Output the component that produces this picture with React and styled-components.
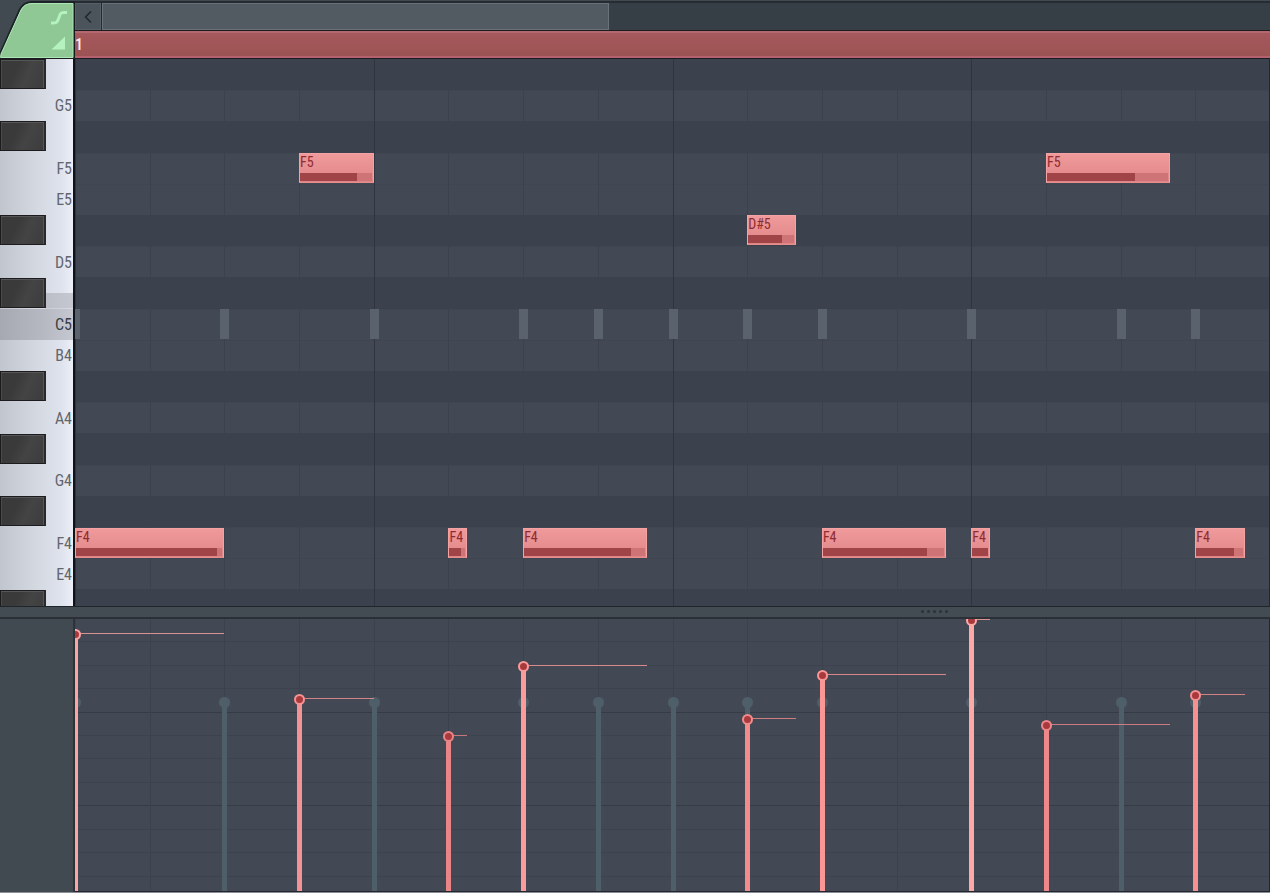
import React from 'react'
import styled, { createGlobalStyle } from 'styled-components'
import { ChevronLeft } from 'lucide-react'

const STEPS = 16
const ROWS = 17.5

const keys = [
  { name: 'G#5', black: true },
  { name: 'G5' },
  { name: 'F#5', black: true },
  { name: 'F5' },
  { name: 'E5' },
  { name: 'D#5', black: true },
  { name: 'D5' },
  { name: 'C#5', black: true },
  { name: 'C5', root: true },
  { name: 'B4' },
  { name: 'A#4', black: true },
  { name: 'A4' },
  { name: 'G#4', black: true },
  { name: 'G4' },
  { name: 'F#4', black: true },
  { name: 'F4' },
  { name: 'E4' },
  { name: 'D#4', black: true, half: true },
]

// step and len are in sixteenths, level is the handle height in the velocity lane
const notes = [
  { key: 'F4', step: 0, len: 2, bar: 96, level: 94.5, color: '#fda5a2' },
  { key: 'F5', step: 3, len: 1, bar: 79, level: 70.5, color: '#f59294' },
  { key: 'F4', step: 5, len: 0.25, bar: 72, level: 57, color: '#ea8587' },
  { key: 'F4', step: 6, len: 1.66, bar: 88, level: 82.5, color: '#fd9a9a' },
  { key: 'D#5', step: 9, len: 0.66, bar: 74, level: 63, color: '#f18b8c' },
  { key: 'F4', step: 10, len: 1.66, bar: 86, level: 79.5, color: '#fb9696' },
  { key: 'F4', step: 12, len: 0.25, bar: 100, level: 99.5, color: '#fda9a6' },
  { key: 'F5', step: 13, len: 1.66, bar: 73, level: 61, color: '#ee8789' },
  { key: 'F4', step: 15, len: 0.66, bar: 82, level: 72, color: '#f69091' },
]

const ghosts = [0, 2, 4, 6, 7, 8, 9, 10, 12, 14, 15]

const GlobalStyle = createGlobalStyle`
  * {
    box-sizing: border-box;
  }

  body {
    margin: 0;
    background: #414a51;
    font-family: 'Roboto Condensed', 'Liberation Sans Narrow', Roboto, sans-serif;
  }

  button {
    font: inherit;
    padding: 0;
    border: 0;
    border-radius: 0;
  }
`

const Container = styled.main`
  display: flex;
  flex-direction: column;
  height: 100vh;
  min-height: 480px;
  overflow: hidden;
  background: #414a51;
  border-bottom: 1px solid #8b8e97;
`

const Header = styled.header`
  display: flex;
  flex: 0 0 59px;
  border-bottom: 1px solid #1b1c22;
`

const Corner = styled.div`
  flex: 0 0 75px;
  display: flex;
`

const HeaderRight = styled.div`
  flex: 1;
  display: flex;
  flex-direction: column;
  padding-top: 1px;
`

const ScrollBar = styled.div`
  display: flex;
  flex: 0 0 30px;
  background: #363e46;
  border-top: 2px solid #262c32;
  border-bottom: 1px solid #1d1a20;
`

const ScrollButton = styled.button`
  flex: 0 0 27px;
  display: flex;
  align-items: center;
  justify-content: center;
  background: #4b545b;
  border-right: 1px solid #23292e;
  box-shadow: inset 0 0 0 1px #566067;
  color: #22282d;
`

const ScrollThumb = styled.button`
  width: 42.4%;
  background: #525b61;
  border: 1px solid #687278;
`

const Ruler = styled.div`
  flex: 1;
  display: flex;
  align-items: center;
  background: linear-gradient(#a6585d, #9c5353);
  border-top: 2px solid #b2696f;
  border-bottom: 2px solid #b4606d;
  color: #ffe9e9;
  font-size: 16px;
  font-weight: 500;
  line-height: 16px;
`

const Roll = styled.section`
  flex: 2 1 0;
  min-height: 0;
  display: flex;
`

const Piano = styled.div`
  flex: 0 0 75px;
  display: flex;
  flex-direction: column;
  overflow: hidden;
  background: linear-gradient(90deg, #c1c5ce, #d4d8e1 50%, #dfe3ed 85%, #eceff8);
  border-right: 2px solid #11131a;
`

const KeyRow = styled.div`
  flex: ${({ $half }) => ($half ? 1 : 2)} 1 0;
  min-height: 0;
  display: flex;
  align-items: ${({ $black }) => ($black ? 'flex-start' : 'stretch')};
  background: ${({ $shade }) => $shade || 'none'};
`

const BlackKey = styled.button`
  flex: 0 0 46px;
  height: 30px;
  background: linear-gradient(115deg, #3a3a3b 35%, #444445 60%, #3c3c3d);
  border: 1px solid #1c1c1e;
  border-right: 2px solid #29292b;
  box-shadow: inset -1px 1px 0 #565658, inset 1px 0 0 #4a4a4c;
`

const WhiteKey = styled.button`
  flex: 1;
  padding: 1px 1px 0 0;
  background: none;
  text-align: right;
  font-size: 16px;
  line-height: 20px;
  color: ${({ $root }) => ($root ? '#3a3c42' : '#63666d')};
`

const Lane = styled.div`
  flex: 1;
  position: relative;
  display: flex;
  flex-direction: column;
  overflow: hidden;
`

const LaneRow = styled.div`
  flex: ${({ $half }) => ($half ? 1 : 2)} 1 0;
  background: ${({ $black }) => ($black ? '#3c424d' : '#434954')};
  border-top: 1px solid ${({ $black }) => ($black ? '#3c424d' : '#404651')};
`

const Steps = styled.div`
  position: absolute;
  inset: 0;
  display: grid;
  grid-template-columns: repeat(${STEPS}, 1fr);
  box-shadow: inset -1px 0 0 #23262e;
`

const Step = styled.div`
  border-left: 1px solid ${({ $beat }) => ($beat ? '#2f343e' : '#3c424d')};
`

const Note = styled.button`
  position: absolute;
  height: calc(100% / ${ROWS} - 1px);
  display: flex;
  flex-direction: column;
  justify-content: space-between;
  padding: 0 1px 1px 0;
  background: linear-gradient(#f09a9c, #df8587);
  border: 1px solid #f4a2a3;
  border-bottom-color: #e58c8d;
  text-align: left;
  color: #8f2c30;
  font-size: 14px;
  line-height: 16px;
`

const NoteTrack = styled.span`
  display: block;
  height: 8px;
  background: #cf7476;
`

const NoteBar = styled.span`
  display: block;
  height: 8px;
  background: #a04447;
`

const GhostNote = styled.span`
  position: absolute;
  width: 9px;
  margin-left: -4px;
  height: calc(100% / ${ROWS} - 1px);
  background: #5a626e;
`

const Splitter = styled.div`
  flex: 0 0 13px;
  display: flex;
  align-items: center;
  justify-content: flex-end;
  gap: 3px;
  padding-right: 322px;
  background: #434c52;
  border-top: 1px solid #20252b;
  border-bottom: 2px solid #2b3037;
`

const Grip = styled.span`
  width: 3px;
  height: 3px;
  border-radius: 50%;
  background: #2c3338;
`

const Velocity = styled.section`
  flex: 1 1 0;
  min-height: 0;
  display: flex;
`

const Side = styled.div`
  flex: 0 0 75px;
  border-right: 2px solid #2e333b;
`

const VelocityLane = styled.div`
  flex: 1;
  position: relative;
  overflow: hidden;
  background: #434954;
  border-bottom: 1px solid #23262e;
`

const Levels = styled.div`
  height: 100%;
  display: flex;
  flex-direction: column;
`

const Level = styled.div`
  flex: 0 0 calc(100% / 11.6);
  border-bottom: 1px solid ${({ $strong }) => ($strong ? '#363c46' : '#3d434e')};
`

const Stem = styled.div`
  position: absolute;
  bottom: 0;
  width: 5px;
  margin-left: -2px;
`

const Handle = styled.span`
  position: absolute;
  top: -5px;
  left: -3px;
  width: 11px;
  height: 11px;
  border-radius: 50%;
`

const Tail = styled.div`
  position: absolute;
  height: 1px;
  opacity: 0.8;
`

const at = (step) => `${(step * 100) / STEPS}%`
const rowAt = (name) => `${(keys.findIndex((k) => k.name === name) * 100) / ROWS}%`

const shadeOf = ({ name, root }) => {
  if (root) return 'linear-gradient(90deg, #a6a9b2, #b6b9c2 60%, #c5c8d1)'
  if (name === 'C#5') {
    return 'linear-gradient(90deg, transparent 45px, #bbbec7 45px, #c5c8d1) 0 100% / 100% 50% no-repeat'
  }
  return undefined
}

export default function App() {
  return (
    <>
      <GlobalStyle />
      <Container>
        <Header>
          <Corner>
            <svg width="75" height="58" viewBox="0 0 75 58">
              <path d="M0 58 L0 54 L20 9 Q24 2 32 2 L74 2 L74 58 Z" fill="#8fc795" stroke="#1d2429" strokeWidth="2" />
              <path d="M0.500 57.500 L1 54 L21 10 Q25 3.500 32 3.500 L73 3.500 L73 57.500 Z" fill="#8fc795" stroke="#aee5b4" strokeWidth="1" />
              <path d="M51 23 C58 23.500 57.500 21 59 17.500 C60 13 61 12 67 12.500" fill="none" stroke="#b4f3bf" strokeWidth="3" />
              <path d="M65 36.500 V49.500 H51.500 Z" fill="#b4f3bf" />
              <path d="M74.500 2 V58" stroke="#16191f" strokeWidth="1" />
            </svg>
          </Corner>
          <HeaderRight>
            <ScrollBar>
              <ScrollButton aria-label="Scroll left">
                <ChevronLeft size={20} strokeWidth={2} />
              </ScrollButton>
              <ScrollThumb aria-label="Scroll position" />
            </ScrollBar>
            <Ruler>1</Ruler>
          </HeaderRight>
        </Header>

        <Roll>
          <Piano>
            {keys.map((k) => (
              <KeyRow key={k.name} $half={k.half} $black={k.black} $shade={shadeOf(k)}>
                {k.black ? (
                  <BlackKey aria-label={k.name} />
                ) : (
                  <WhiteKey $root={k.root}>{k.name}</WhiteKey>
                )}
              </KeyRow>
            ))}
          </Piano>
          <Lane>
            {keys.map((k) => (
              <LaneRow key={k.name} $half={k.half} $black={k.black} />
            ))}
            <Steps>
              {Array.from({ length: STEPS }, (_, i) => (
                <Step key={i} $beat={i % 4 === 0} />
              ))}
            </Steps>
            {ghosts.map((step) => (
              <GhostNote key={step} style={{ left: at(step), top: rowAt('C5') }} />
            ))}
            {notes.map((n) => (
              <Note key={n.step} style={{ left: at(n.step), top: rowAt(n.key), width: at(n.len) }}>
                {n.key}
                <NoteTrack>
                  <NoteBar style={{ width: `${n.bar}%` }} />
                </NoteTrack>
              </Note>
            ))}
          </Lane>
        </Roll>

        <Splitter>
          <Grip />
          <Grip />
          <Grip />
          <Grip />
          <Grip />
        </Splitter>

        <Velocity>
          <Side />
          <VelocityLane>
            <Levels>
              {Array.from({ length: 11 }, (_, i) => (
                <Level key={i} $strong={i % 4 === 3} />
              ))}
            </Levels>
            <Steps>
              {Array.from({ length: STEPS }, (_, i) => (
                <Step key={i} />
              ))}
            </Steps>
            {ghosts.map((step) => (
              <Stem key={step} style={{ left: at(step), height: '69.5%', background: '#4f5f69' }}>
                <Handle style={{ background: '#4f5f69' }} />
              </Stem>
            ))}
            {notes.map((n) => (
              <React.Fragment key={n.step}>
                <Tail style={{ left: at(n.step), bottom: `${n.level}%`, width: at(n.len), background: n.color }} />
                <Stem style={{ left: at(n.step), height: `${n.level}%`, background: n.color }}>
                  <Handle style={{ background: '#a83a3d', border: `2px solid ${n.color}` }} />
                </Stem>
              </React.Fragment>
            ))}
          </VelocityLane>
        </Velocity>
      </Container>
    </>
  )
}
